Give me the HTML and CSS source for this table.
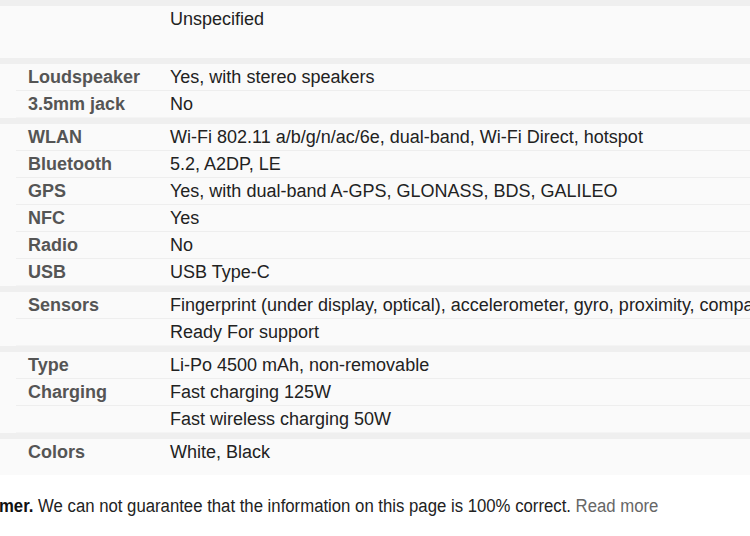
FILE: index.html
```html
<!DOCTYPE html>
<html>
<head>
<meta charset="utf-8">
<link rel="stylesheet" href="styles.css">
</head>
<body>
<div class="specs">
  <div class="band"></div>
  <div class="section first">
    <div class="row"><span class="label"></span><span class="value">Unspecified</span></div>
  </div>
  <div class="band"></div>
  <div class="section">
    <div class="row"><span class="label">Loudspeaker</span><span class="value">Yes, with stereo speakers</span></div>
    <div class="row"><span class="label">3.5mm jack</span><span class="value">No</span></div>
  </div>
  <div class="band"></div>
  <div class="section">
    <div class="row"><span class="label">WLAN</span><span class="value">Wi-Fi 802.11 a/b/g/n/ac/6e, dual-band, Wi-Fi Direct, hotspot</span></div>
    <div class="row"><span class="label">Bluetooth</span><span class="value">5.2, A2DP, LE</span></div>
    <div class="row"><span class="label">GPS</span><span class="value">Yes, with dual-band A-GPS, GLONASS, BDS, GALILEO</span></div>
    <div class="row"><span class="label">NFC</span><span class="value">Yes</span></div>
    <div class="row"><span class="label">Radio</span><span class="value">No</span></div>
    <div class="row"><span class="label">USB</span><span class="value">USB Type-C</span></div>
  </div>
  <div class="band"></div>
  <div class="section">
    <div class="row"><span class="label">Sensors</span><span class="value">Fingerprint (under display, optical), accelerometer, gyro, proximity, compass</span></div>
    <div class="row"><span class="label"></span><span class="value">Ready For support</span></div>
  </div>
  <div class="band"></div>
  <div class="section">
    <div class="row"><span class="label">Type</span><span class="value">Li-Po 4500 mAh, non-removable</span></div>
    <div class="row"><span class="label">Charging</span><span class="value">Fast charging 125W</span></div>
    <div class="row"><span class="label"></span><span class="value">Fast wireless charging 50W</span></div>
  </div>
  <div class="band"></div>
  <div class="section last">
    <div class="row"><span class="label">Colors</span><span class="value">White, Black</span></div>
  </div>
</div>
<p class="disclaimer"><span class="narrow"><b>Disclaimer.</b> We can not guarantee that the information on this page is 100% correct. <a class="more" href="#">Read more</a></span></p>
</body>
</html>
```
FILE: styles.css
```css
html, body {
  margin: 0;
  padding: 0;
  background: #ffffff;
  overflow: hidden;
  width: 750px;
}
body {
  font-family: "Liberation Sans", Arial, sans-serif;
  font-size: 18px;
  color: #222;
}
.specs {
  background: #fafafa;
}
.band {
  height: 6px;
  background: #efefef;
}
.section {
  padding-left: 16px;
  background: #fafafa;
}
.section.first {
  padding-bottom: 25px;
}
.section.last {
  padding-bottom: 9px;
}
.row {
  display: flex;
  height: 26px;
  line-height: 26px;
  border-bottom: 1px solid #eeeeee;
  white-space: nowrap;
}
.row:last-child {
  border-bottom-color: #f4f4f4;
}
.section.first .row, .section.last .row {
  border-bottom-color: #fafafa;
}
.label {
  flex: 0 0 154px;
  padding-left: 12px;
  box-sizing: border-box;
  font-weight: bold;
  color: #555;
}
.value {
  color: #222;
}
.disclaimer {
  margin: 21px 0 0 -55px;
  font-family: "Liberation Sans", Arial, sans-serif;
  font-size: 18px;
  line-height: 20px;
  color: #222;
  white-space: nowrap;
}
.narrow {
  display: inline-block;
  transform: scaleX(0.93);
  transform-origin: left center;
}
.disclaimer b {
  color: #111;
}
.more {
  color: #666;
  text-decoration: none;
}
```
